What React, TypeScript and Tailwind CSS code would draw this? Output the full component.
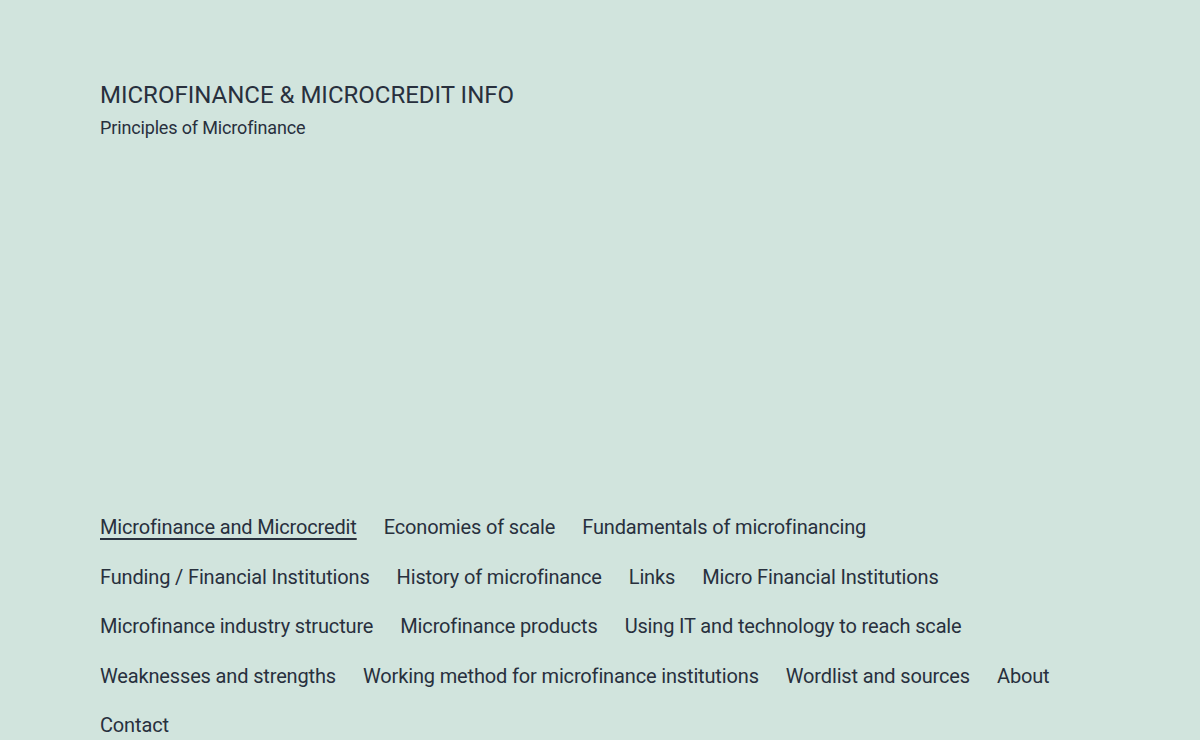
import React from "react";

const items = [
  "Microfinance and Microcredit",
  "Economies of scale",
  "Fundamentals of microfinancing",
  "Funding / Financial Institutions",
  "History of microfinance",
  "Links",
  "Micro Financial Institutions",
  "Microfinance industry structure",
  "Microfinance products",
  "Using IT and technology to reach scale",
  "Weaknesses and strengths",
  "Working method for microfinance institutions",
  "Wordlist and sources",
  "About",
  "Contact",
];

export default function App() {
  return (
    <div className="min-h-[740px] bg-[#d1e4dd] text-[#28303d] font-['Roboto',sans-serif]">
      <header className="px-[100px] pt-[80px]">
        <div className="text-[24px] leading-[31px] uppercase">Microfinance &amp; Microcredit Info</div>
        <div className="mt-[4px] text-[18px] leading-[25px] tracking-[-0.15px]">Principles of Microfinance</div>
        <nav className="mt-[362.5px]">
          <ul className="flex flex-wrap gap-x-[27px]">
            {items.map((it, i) => (
              <li key={it} className="py-[9.75px] text-[20px] leading-[30px] tracking-[-0.15px]">
                <a
                  href="#"
                  className={
                    i === 0
                      ? "underline decoration-2 underline-offset-[4px] decoration-[#28303d]"
                      : "no-underline"
                  }
                >
                  {it}
                </a>
              </li>
            ))}
          </ul>
        </nav>
      </header>
    </div>
  );
}
